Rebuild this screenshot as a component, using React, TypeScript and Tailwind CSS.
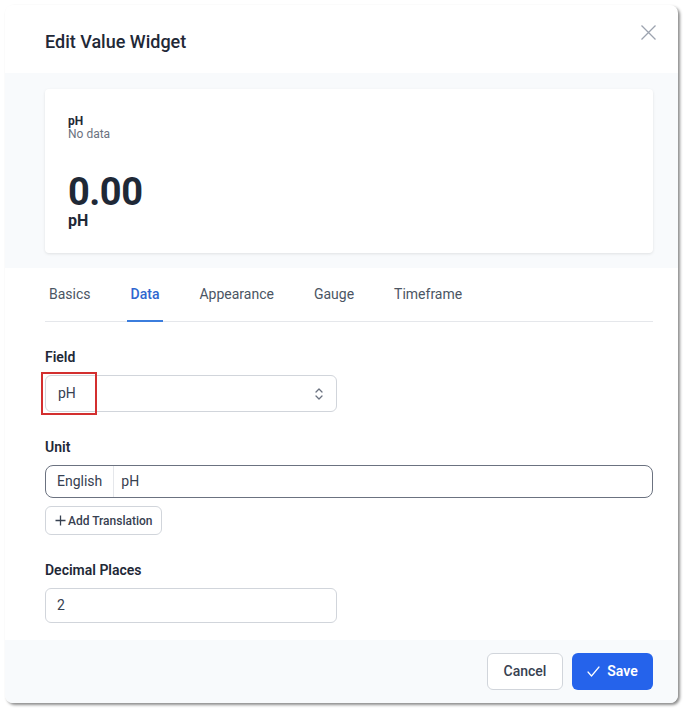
import React from 'react';

const tabs = ['Basics', 'Data', 'Appearance', 'Gauge', 'Timeframe'];

export default function App() {
  return (
    <div className="w-[686px] h-[711px] bg-white pl-[5px] pt-[5px] font-['Roboto',sans-serif] text-[#1f2937]">
      <div className="relative w-[673px] h-[698px] bg-white rounded-lg shadow-[2px_2px_3px_rgba(0,0,0,0.45)] overflow-hidden flex flex-col">
        {/* header */}
        <div className="h-[68px] shrink-0 flex items-center pl-[40px] pr-[21px] justify-between">
          <h2 className="text-[18px] font-medium text-[#1f2937] mt-[4px]">Edit Value Widget</h2>
          <button className="text-[#9ca3af] -mt-[14px]">
            <svg width="17" height="17" viewBox="0 0 17 17" fill="none" stroke="currentColor" strokeWidth="1.3">
              <path d="M1.5 1.5l14 14M15.5 1.5l-14 14" />
            </svg>
          </button>
        </div>

        {/* preview */}
        <div className="bg-[#f8fafc] pl-[40px] pr-[25px] pt-[16px] pb-[15px] shrink-0">
          <div className="bg-white rounded shadow-[0_1px_3px_rgba(0,0,0,0.1)] h-[164px] px-[23px] pt-[25px]">
            <div className="text-[12px] leading-[14px] font-bold text-[#1f2937]">pH</div>
            <div className="text-[12px] leading-[13px] text-[#6b7280]">No data</div>
            <div className="mt-[31px] text-[38px] leading-[40px] font-bold text-[#1f2937] tracking-[-0.5px]">0.00</div>
            <div className="text-[16px] leading-[18px] font-bold text-[#1f2937]">pH</div>
          </div>
        </div>

        {/* body */}
        <div className="relative flex-1 pl-[40px] pr-[25px]">
          <div className="flex gap-[32px] border-b border-[#e5e7eb]">
            {tabs.map((t) => (
              <div
                key={t}
                className={`px-[4px] pt-[16px] pb-[16px] text-[14px] leading-5 -mb-px border-b-2 ${
                  t === 'Data' ? 'border-[#3b7ddd] text-[#2f66d0] font-medium' : 'border-transparent text-[#4b5563]'
                }`}
              >
                {t}
              </div>
            ))}
          </div>

          <div className="pt-[25px]">
            <label className="block text-[14px] leading-5 font-semibold text-[#1f2937]">Field</label>
            <div className="relative mt-[8px] w-[292px] h-[37px] border border-[#d1d5db] rounded-md flex items-center justify-between pl-[12px] pr-[12px] text-[14px] text-[#374151]">
              <span>pH</span>
              <svg width="10" height="16" viewBox="0 0 10 16" fill="none" stroke="#6b7280" strokeWidth="1.3" strokeLinecap="round" strokeLinejoin="round">
                <path d="M2 6l3-3 3 3M2 10l3 3 3-3" />
              </svg>
              <div className="absolute -left-[5px] -top-[4px] w-[56px] h-[43px] border-2 border-[#d32f2f]" />
            </div>

            <label className="block mt-[25px] text-[14px] leading-5 font-semibold text-[#1f2937]">Unit</label>
            <div className="mt-[8px] h-[33px] border border-[#6b7280] rounded-lg flex items-stretch text-[14px] text-[#374151]">
              <div className="px-[11px] flex items-center border-r border-[#e5e7eb]">English</div>
              <div className="pl-[7px] flex items-center">pH</div>
            </div>
            <button className="mt-[8px] h-[29px] w-[117px] border border-[#d1d5db] rounded-md flex items-center gap-[2px] pl-[9px] text-[12px] text-[#374151] font-medium">
              <svg width="11" height="11" viewBox="0 0 11 11" fill="none" stroke="#374151" strokeWidth="1.3">
                <path d="M5.5 0.5v10M0.5 5.5h10" />
              </svg>
              Add Translation
            </button>

            <label className="block mt-[25px] text-[14px] leading-5 font-semibold text-[#1f2937]">Decimal Places</label>
            <div className="mt-[8px] w-[292px] h-[35px] border border-[#d1d5db] rounded-md flex items-center pl-[11px] text-[14px] text-[#374151]">
              2
            </div>
          </div>
        </div>

        {/* footer */}
        <div className="h-[63px] shrink-0 bg-[#f8fafc] pl-[40px] pr-[25px] flex items-center justify-end gap-[9px]">
          <button className="h-[37px] w-[76px] bg-white border border-[#d1d5db] rounded-md text-[14px] font-medium text-[#374151]">
            Cancel
          </button>
          <button className="h-[37px] w-[81px] bg-[#2563eb] rounded-md text-[14px] font-semibold text-white flex items-center justify-center gap-[7px]">
            <svg width="13" height="11" viewBox="0 0 13 11" fill="none" stroke="white" strokeWidth="1.2" strokeLinecap="round" strokeLinejoin="round">
              <path d="M1 6l3.5 4L12 1" />
            </svg>
            Save
          </button>
        </div>
      </div>
    </div>
  );
}
